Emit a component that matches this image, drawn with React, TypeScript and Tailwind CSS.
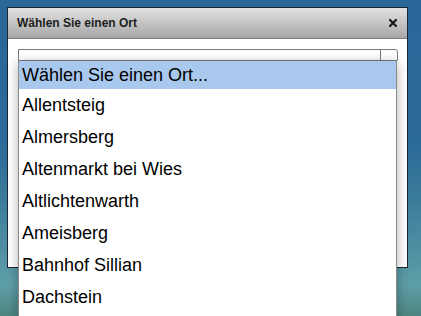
const places = [
  'Allentsteig',
  'Almersberg',
  'Altenmarkt bei Wies',
  'Altlichtenwarth',
  'Ameisberg',
  'Bahnhof Sillian',
  'Dachstein',
];

const App = () => {
  return (
    <div className="w-[421px] h-[316px] overflow-hidden pt-[7px] pl-[7px] font-['Liberation_Sans',Arial,sans-serif] bg-[linear-gradient(to_bottom,#2b6698_0%,#2c6a99_45%,#3a7a9a_62%,#4f8ea2_78%,#5e9ea7_90%,#4e8682_100%)]">
      <div className="w-[401px] h-[261px] border border-[#1a2836] bg-white flex flex-col">
        {/* title bar */}
        <div className="h-[31px] shrink-0 flex items-center justify-between pl-[9px] pr-[10px] border-b border-[#7e7e7e] bg-[linear-gradient(to_bottom,#e2e2e2,#a6a6a6)]">
          <span className="text-[12px] font-bold text-[#1e1e1e]">Wählen Sie einen Ort</span>
          <svg width="8" height="8" viewBox="0 0 8 8" className="mt-[-1px]">
            <path d="M1 1L7 7M7 1L1 7" stroke="#1a1a1a" strokeWidth="2.2" strokeLinecap="square" />
          </svg>
        </div>

        {/* body */}
        <div className="pt-[10px] pl-[10px]">
          <div className="relative w-[380px]">
            <div className="h-[12px] border border-[#7a7a7a] rounded-tr-[3px] flex justify-end bg-white">
              <div className="w-[17px] border-l border-[#7a7a7a]" />
            </div>

            {/* open dropdown list */}
            <div className="absolute top-full left-0 w-[379px] h-[270px] bg-white border-x border-[#8a8a8a] shadow-[0_2px_11px_rgba(0,0,0,0.3)] text-[18px] text-black">
              <div className="h-[28px] flex items-center pl-[3px] bg-[#a9c8ee]">Wählen Sie einen Ort...</div>
              {places.map((place) => (
                <div key={place} className="h-[32px] flex items-center pl-[3px]">
                  {place}
                </div>
              ))}
            </div>
          </div>
        </div>
      </div>
    </div>
  );
};

export default App;
